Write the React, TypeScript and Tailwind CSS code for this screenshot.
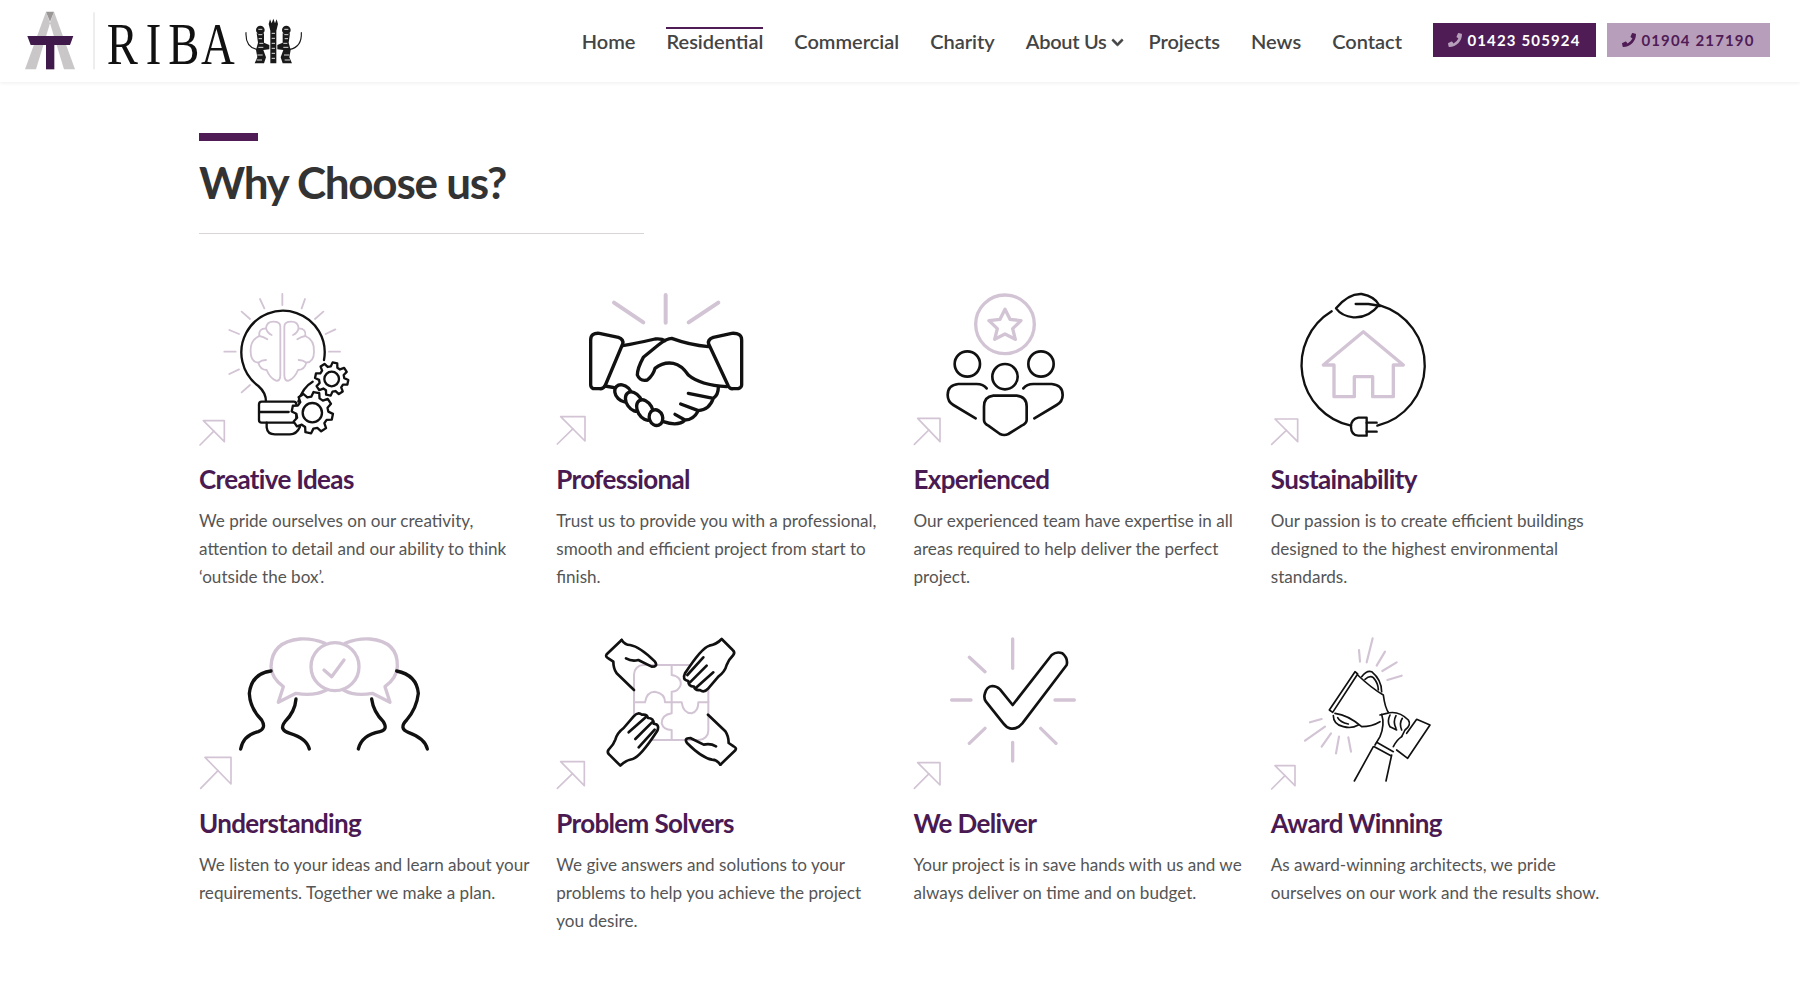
import React from "react";
import { FaPhoneAlt, FaChevronDown } from "react-icons/fa";

const G = "#d2c4d4";
const K = "#111111";

function gearPath(cx: number, cy: number, rOut: number, rIn: number, teeth: number) {
  const pts: string[] = [];
  const step = (Math.PI * 2) / teeth;
  for (let i = 0; i < teeth; i++) {
    const a = i * step + 0.2;
    const list: [number, number][] = [
      [rIn, a - step * 0.34],
      [rOut, a - step * 0.18],
      [rOut, a + step * 0.18],
      [rIn, a + step * 0.34],
    ];
    for (const [r, t] of list) {
      pts.push(`${(cx + r * Math.cos(t)).toFixed(1)} ${(cy + r * Math.sin(t)).toFixed(1)}`);
    }
  }
  return "M" + pts.join(" L") + " Z";
}

function Arrow({ x1, y1, x2, y2, tx, ty }: { x1: number; y1: number; x2: number; y2: number; tx: number; ty: number }) {
  return (
    <g fill="none" stroke={G} strokeWidth="5">
      <path d={`M${x1} ${y1} H${x2} V${y2} Z`} />
      <path d={`M${(x1 + x2) / 2} ${(y1 + y2) / 2} L${tx} ${ty}`} />
    </g>
  );
}

function Icon({ vx, vy, children }: { vx: number; vy: number; children: React.ReactNode }) {
  return (
    <svg width="260" height="160" viewBox={`${vx} ${vy} 780 480`} className="block overflow-visible" fill="none" strokeLinecap="round" strokeLinejoin="round">
      {children}
    </svg>
  );
}

const Bulb = () => (
  <Icon vx={27} vy={30}>
    <Arrow x1={40} y1={422} x2={103} y2={485} tx={30} ty={495} />
    <g stroke={G} strokeWidth="5.5">
      <path d="M277 42V75M210 57L223 85M155 95L180 117M118 150L147 162M103 215H137M118 282L147 268M155 337L180 315M335 85L345 57M375 117L400 95M407 162L436 148M417 215H450" />
      <path d="M271 140Q271 125 250 125Q230 125 228 145Q205 145 208 168Q180 180 182 215Q182 245 205 248Q210 270 230 270Q240 295 258 302Q271 304 271 285Z" />
      <path d="M208 168Q220 170 232 178M205 248Q215 240 228 240M228 145Q232 160 245 165" />
      <g transform="translate(554 0) scale(-1 1)">
        <path d="M271 140Q271 125 250 125Q230 125 228 145Q205 145 208 168Q180 180 182 215Q182 245 205 248Q210 270 230 270Q240 295 258 302Q271 304 271 285Z" />
        <path d="M208 168Q220 170 232 178M205 248Q215 240 228 240M228 145Q232 160 245 165" />
      </g>
    </g>
    <g stroke={K} strokeWidth="7">
      <path d="M402 240A125 125 0 1 0 205 318Q228 338 228 365" />
      <path d="M325 365Q338 322 368 305" />
      <rect x="207" y="365" width="112" height="63" rx="8" fill="#fff" />
      <path d="M210 396H296" />
      <path d="M230 428V442Q232 463 255 463H300Q320 463 330 440" />
      <path d={gearPath(367, 398, 62, 48, 8)} fill="#fff" />
      <circle cx="367" cy="398" r="29" />
      <path d={gearPath(425, 297, 50, 38, 8)} fill="#fff" />
      <circle cx="425" cy="297" r="22" />
    </g>
  </Icon>
);

const Hands = () => (
  <Icon vx={18} vy={30}>
    <Arrow x1={32} y1={410} x2={105} y2={483} tx={22} ty={492} />
    <path d="M192 68L280 127M347 45V128M505 68L416 127" stroke={G} strokeWidth="12" />
    <g stroke={K} strokeWidth="10">
      <path d="M148 160L205 172Q222 178 218 192L165 318Q158 328 148 326H130Q122 322 122 315V180Q122 158 148 160Z" />
      <path d="M545 160L490 172Q472 178 476 192L535 318Q540 328 550 326H565Q575 322 575 315V180Q575 158 545 160Z" />
      <path d="M218 197Q260 190 315 177Q335 175 345 182" />
      <path d="M475 200Q420 195 365 175Q350 175 325 195L280 232Q262 265 262 285Q270 305 292 300Q310 285 315 265Q340 245 370 250Q395 255 415 285Q450 315 530 320" />
      <path d="M505 322Q505 345 490 355L415 340M490 355Q478 390 445 392L392 372M445 392Q430 420 405 420L375 403M405 420Q385 440 340 425" />
      <path d="M165 318L205 325" />
      <g fill="#fff">
        <ellipse cx="220" cy="340" rx="22" ry="29" transform="rotate(-45 220 340)" />
        <ellipse cx="252" cy="365" rx="22" ry="32" transform="rotate(-35 252 365)" />
        <ellipse cx="285" cy="390" rx="22" ry="33" transform="rotate(-30 285 390)" />
        <ellipse cx="318" cy="413" rx="20" ry="24" transform="rotate(-20 318 413)" />
      </g>
    </g>
  </Icon>
);

const People = () => (
  <Icon vx={27} vy={30}>
    <Arrow x1={38} y1={415} x2={105} y2={485} tx={28} ty={493} />
    <g stroke={G} strokeWidth="10">
      <circle cx="300" cy="133" r="88" />
      <path d="M300 88L315 118L348 122L323 146L331 178L300 162L269 178L277 146L252 122L285 118Z" />
    </g>
    <g stroke={K} strokeWidth="8">
      <circle cx="187" cy="252" r="38" />
      <circle cx="300" cy="290" r="38" />
      <circle cx="408" cy="252" r="38" />
      <path d="M245 325Q235 312 215 312H160Q128 315 128 345Q128 365 145 375L212 415" />
      <path d="M355 325Q365 312 385 312H440Q473 315 473 345Q473 365 455 375L388 415" />
      <path d="M265 347H335Q365 350 365 380V420Q365 430 350 437L310 462Q298 468 285 462L250 437Q237 430 237 420V380Q237 350 265 347Z" />
    </g>
  </Icon>
);

const Eco = () => (
  <Icon vx={18} vy={30}>
    <Arrow x1={30} y1={417} x2={98} y2={485} tx={20} ty={493} />
    <path d="M175 255L295 155L415 255H385V350H323V290H268V350H207V255Z" stroke={G} strokeWidth="10" />
    <g stroke={K} strokeWidth="7">
      <path d="M213 85Q250 40 290 42Q330 50 342 75Q310 115 265 112Q230 108 213 85Z" />
      <path d="M272 72H310Q330 75 345 78" />
      <path d="M200 94A187 187 0 0 0 258 437" />
      <path d="M345 76A187 187 0 0 1 337 437" />
      <path d="M305 413H280Q258 418 258 440Q258 465 280 467H305Z" />
      <path d="M305 428H335M305 455H335" />
    </g>
  </Icon>
);

const Talk = () => (
  <Icon vx={27} vy={27}>
    <Arrow x1={45} y1={397} x2={123} y2={477} tx={32} ty={490} />
    <g stroke={G} strokeWidth="10">
      <path d="M405 55Q370 40 330 42Q245 50 243 125Q245 160 280 185L265 232L318 205Q370 215 410 195" />
      <path d="M465 55Q500 40 540 42Q625 50 622 125Q620 160 585 185L600 232L547 205Q495 215 460 195" />
      <circle cx="435" cy="125" r="72" />
      <path d="M402 135L425 155L462 105" />
    </g>
    <g stroke={K} strokeWidth="10">
      <path d="M243 138Q185 145 178 205Q180 250 215 285Q230 310 205 320Q160 330 152 372" />
      <path d="M318 222Q315 260 285 290Q265 315 300 325Q350 340 358 372" />
      <path d="M545 222Q550 260 580 290Q595 315 570 320Q515 330 505 372" />
      <path d="M620 138Q680 150 685 205Q680 250 650 285Q625 310 655 322Q705 340 712 372" />
    </g>
  </Icon>
);

const handA = (
  <g>
    <path d="M215 45L170 88Q165 95 175 100L190 110Q190 130 200 145L252 195" />
    <path d="M215 45Q225 60 240 60Q270 65 315 110Q325 125 305 125L265 105Q245 110 228 100" />
  </g>
);
const handB = (
  <g>
    <path d="M515 42Q500 58 478 62Q455 68 405 145Q395 165 415 168Q415 185 432 185Q435 197 450 195Q462 205 475 190L505 155Q525 140 530 120Q535 105 550 90Q556 82 548 75Z" fill="#fff" />
    <path d="M412 150L460 97M420 172L470 122M438 188L490 142" />
  </g>
);

const Puzzle = () => (
  <Icon vx={18} vy={27}>
    <Arrow x1={32} y1={410} x2={103} y2={482} tx={22} ty={490} />
    <g stroke={G} strokeWidth="6">
      <rect x="252" y="120" width="223" height="225" rx="28" />
      <path d="M365 122V150Q395 155 392 180Q385 200 365 200V232" />
      <path d="M252 232H285Q290 200 315 200Q345 205 345 232H395Q400 265 425 265Q445 260 445 232H475" />
      <path d="M365 232V265Q335 270 335 295Q340 315 365 315V345" />
    </g>
    <g stroke={K} strokeWidth="8">
      {handA}
      {handB}
      <g transform="rotate(180 363 232)">
        {handA}
        {handB}
      </g>
    </g>
  </Icon>
);

const Tick = () => (
  <Icon vx={27} vy={27}>
    <Arrow x1={38} y1={413} x2={105} y2={480} tx={28} ty={490} />
    <path d="M323 42V130M323 352V408M140 225H198M450 225H508M193 97L240 140M193 355L240 310M407 310L453 355" stroke={G} strokeWidth="10" />
    <path d="M240 205Q245 185 262 183Q275 183 285 193L323 240L440 90Q455 78 472 85Q490 100 485 120L352 295Q335 315 315 310Q305 308 295 295L243 230Q235 218 240 205Z" stroke={K} strokeWidth="8" />
  </Icon>
);

const Trophy = () => (
  <Icon vx={18} vy={27}>
    <Arrow x1={30} y1={422} x2={90} y2={482} tx={20} ty={492} />
    <path d="M323 40L305 112M282 75L285 110M360 80L335 122M395 112L352 138M410 152L367 165M170 282L135 292M180 305L120 347M198 325L170 365M222 335L213 385M250 337L258 380" stroke={G} strokeWidth="6.5" />
    <g stroke={K} strokeWidth="5">
      <path d="M270 140L278 147L203 262L193 255Z" />
      <path d="M278 150Q320 190 355 210Q360 250 372 265" />
      <path d="M210 265Q250 270 290 305Q320 305 345 290" />
      <path d="M290 155Q305 135 320 140Q350 165 350 200M300 163Q315 150 325 158Q340 175 340 195" />
      <path d="M205 272Q205 298 235 305Q260 312 280 300M218 278Q225 292 250 297" />
      <path d="M455 283L495 300L428 400L395 375M455 283L425 325" />
      <path d="M345 270L365 265Q400 255 430 285Q440 300 420 315L410 335" fill="#fff" />
      <path d="M375 270Q365 290 375 305L395 315M393 272Q383 290 393 310M412 280Q402 295 410 315" />
      <path d="M350 268Q360 300 345 335L330 360M410 335Q395 345 385 365" />
      <path d="M335 352L385 380M328 365L378 392" />
      <path d="M325 365L268 468M380 390L363 468" />
    </g>
  </Icon>
);

const items = [
  { icon: <Bulb />, title: "Creative Ideas", text: "We pride ourselves on our creativity, attention to detail and our ability to think ‘outside the box’." },
  { icon: <Hands />, title: "Professional", text: "Trust us to provide you with a professional, smooth and efficient project from start to finish." },
  { icon: <People />, title: "Experienced", text: "Our experienced team have expertise in all areas required to help deliver the perfect project." },
  { icon: <Eco />, title: "Sustainability", text: "Our passion is to create efficient buildings designed to the highest environmental standards." },
  { icon: <Talk />, title: "Understanding", text: "We listen to your ideas and learn about your requirements. Together we make a plan." },
  { icon: <Puzzle />, title: "Problem Solvers", text: "We give answers and solutions to your problems to help you achieve the project you desire." },
  { icon: <Tick />, title: "We Deliver", text: "Your project is in save hands with us and we always deliver on time and on budget." },
  { icon: <Trophy />, title: "Award Winning", text: "As award-winning architects, we pride ourselves on our work and the results show." },
];

const Logo = () => (
  <svg width="310" height="82" viewBox="0 0 930 246" className="block shrink-0">
    <path d="M138 35L150 70L108 208H75Z" fill="#c9c7c7" />
    <path d="M162 35L225 208H192L150 70Z" fill="#c9c7c7" />
    <path d="M138 35H162L150 66Z" fill="#9a9696" />
    <path d="M82 108H220L210 135H92Z" fill="#3f1a4a" />
    <path d="M138 135H163V208H138Z" fill="#3f1a4a" />
    <path d="M282 37V208" stroke="#dcdcdc" strokeWidth="3" />
    <text transform="translate(0 191) scale(0.8 1)" x="400 547 631 754" y="0" fontFamily="'Liberation Serif', serif" fontSize="175" fill="#111">RIBA</text>
    <g fill="#1a1a1a">
      <path d="M810 58L815 70L820 56L825 70L830 58L834 72L829 92V190H811V92L806 72Z" />
      <circle cx="781" cy="90" r="13" />
      <circle cx="859" cy="90" r="13" />
      <path d="M770 100H792V128L808 135V148L790 150L798 172L792 190H764L772 172L768 150L774 128Z" />
      <path d="M848 100H870L866 128L872 150L868 172L876 190H848L842 172L850 150L832 148V135L848 128Z" />
    </g>
    <g stroke="#1a1a1a" strokeWidth="3.5" fill="none" strokeLinecap="round">
      <path d="M738 98Q736 140 770 148" />
      <path d="M904 98Q906 140 870 148" />
    </g>
    <g stroke="#fff" strokeWidth="2.5" fill="none">
      <path d="M815 100H825M815 115H825M815 130H825M815 145H825M815 160H825M815 175H825" />
      <path d="M775 88H787M775 104H787M776 116H786M778 130H790M775 142H790M772 165H788M770 180H786" />
      <path d="M853 88H865M853 104H865M854 116H864M850 130H862M850 142H865M852 165H868M854 180H870" />
    </g>
  </svg>
);

const nav = ["Home", "Residential", "Commercial", "Charity", "About Us", "Projects", "News", "Contact"];

export default function App() {
  return (
    <div className="min-h-[996px] bg-white font-[family-name:Lato,sans-serif]">
      <header className="flex h-[82px] items-center justify-between pr-[30px] shadow-[0_1px_4px_rgba(0,0,0,0.07)]">
        <Logo />
        <div className="mb-[2px] flex items-center gap-[31px]">
          <nav className="flex items-center gap-[31px] text-[20px] font-semibold text-[#444]">
            {nav.map((n) => (
              <a
                key={n}
                className={`flex items-center gap-[5px] border-t-2 leading-[25px] ${n === "Residential" ? "border-[#501c56]" : "border-transparent"} ${n === "About Us" ? "-mr-[7px] tracking-[-0.3px]" : ""}`}
              >
                {n}
                {n === "About Us" && <FaChevronDown className="mt-[3px] stroke-current stroke-[30px] text-[13px] text-[#444]" />}
              </a>
            ))}
          </nav>
          <div className="flex gap-[11px]">
            <a className="flex h-[34px] w-[163px] items-center justify-center gap-[5px] bg-[#501c56] text-[15px] font-bold leading-none tracking-[1.15px] text-white">
              <FaPhoneAlt className="-scale-x-100 text-[14px] text-[#b79fbc]" />
              01423 505924
            </a>
            <a className="flex h-[34px] w-[163px] items-center justify-center gap-[5px] bg-[#b79fbc] text-[15px] font-bold leading-none tracking-[1.15px] text-[#501c56]">
              <FaPhoneAlt className="-scale-x-100 text-[14px] text-[#501c56]" />
              01904 217190
            </a>
          </div>
        </div>
      </header>
      <main className="pl-[199px] pt-[51px]">
        <div className="h-[8px] w-[59px] bg-[#501c56]" />
        <h1 className="mt-[10px] text-[44px] font-bold leading-[62px] tracking-[-1.25px] text-[#333]">Why Choose us?</h1>
        <div className="mt-[20px] h-px w-[445px] bg-[#d8d4d8]" />
        <div className="mt-[56px] grid w-[1429px] grid-cols-4 gap-y-[22px]">
          {items.map((it) => (
            <div key={it.title} className="h-[322px] pr-[22px]">
              {it.icon}
              <h2 className="mt-[11px] text-[26px] font-bold leading-[36px] tracking-[-0.65px] text-[#4a1a52]">{it.title}</h2>
              <p className="mt-[10px] text-[17.1px] leading-[27.8px] text-[#555]">{it.text}</p>
            </div>
          ))}
        </div>
      </main>
    </div>
  );
}
